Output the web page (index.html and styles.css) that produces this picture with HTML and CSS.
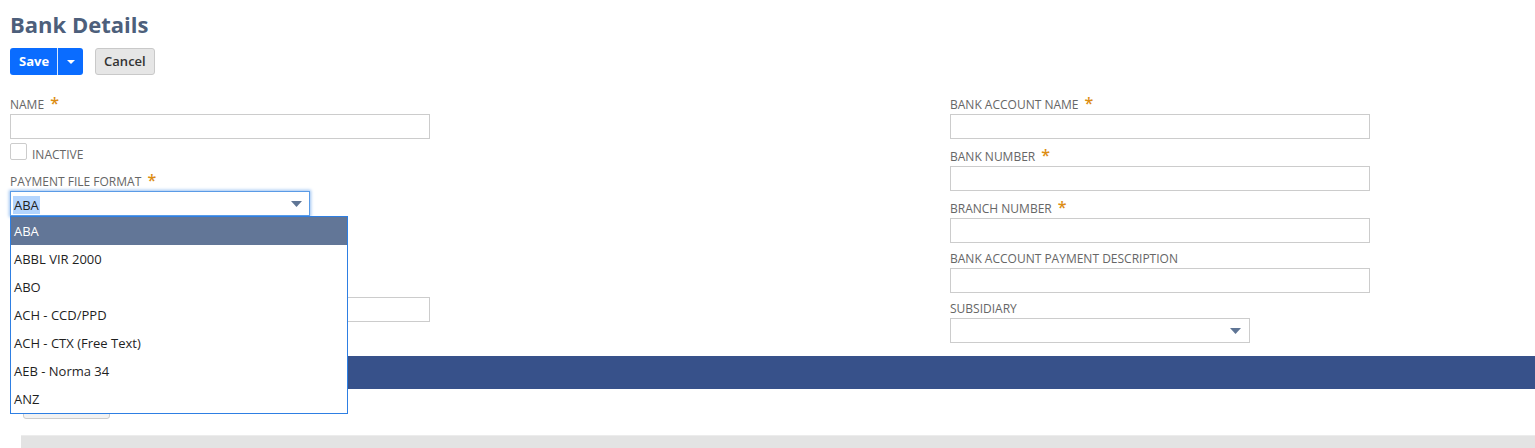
FILE: index.html
```html
<!DOCTYPE html>
<html lang="en">
<head>
<meta charset="utf-8">
<title>Bank Details</title>
<link rel="stylesheet" href="styles.css">
</head>
<body>
<div class="page">
  <h1 class="title">Bank Details</h1>

  <div class="actions">
    <div class="split">
      <button class="btn-primary" type="button">Save</button>
      <span class="btn-caret">
        <svg width="8" height="4" viewBox="0 0 8 4"><path d="M0 0h8L4 4z" fill="#fff"/></svg>
      </span>
    </div>
    <button class="btn-secondary" type="button">Cancel</button>
  </div>

  <div class="form">
    <div class="col">
      <div class="field">
        <label class="label label--req">NAME <span class="star">*</span></label>
        <div class="input"></div>
      </div>
      <div class="check-row">
        <span class="checkbox"></span>
        <span class="check-label">INACTIVE</span>
      </div>
      <div class="field field--after-check">
        <label class="label label--req">PAYMENT FILE FORMAT <span class="star">*</span></label>
        <div class="select select--focus">
          <span class="select-value"><span class="selection">ABA</span></span>
          <svg width="11" height="6" viewBox="0 0 11 6"><path d="M0 0h11L5.5 6z" fill="#5f7595"/></svg>
          <ul class="listbox">
            <li class="option option--active">ABA</li>
            <li class="option">ABBL VIR 2000</li>
            <li class="option">ABO</li>
            <li class="option">ACH - CCD/PPD</li>
            <li class="option">ACH - CTX (Free Text)</li>
            <li class="option">AEB - Norma 34</li>
            <li class="option">ANZ</li>
          </ul>
        </div>
      </div>
      <div class="field field--plain">
        <span class="label label--req">&nbsp;</span>
        <div class="select"></div>
      </div>
      <div class="field field--gap">
        <span class="label">&nbsp;</span>
        <div class="input"></div>
      </div>
    </div>

    <div class="col">
      <div class="field">
        <label class="label label--req">BANK ACCOUNT NAME <span class="star">*</span></label>
        <div class="input"></div>
      </div>
      <div class="field field--plain">
        <label class="label label--req">BANK NUMBER <span class="star">*</span></label>
        <div class="input"></div>
      </div>
      <div class="field field--plain">
        <label class="label label--req">BRANCH NUMBER <span class="star">*</span></label>
        <div class="input"></div>
      </div>
      <div class="field field--plain">
        <label class="label">BANK ACCOUNT PAYMENT DESCRIPTION</label>
        <div class="input"></div>
      </div>
      <div class="field field--plain">
        <label class="label">SUBSIDIARY</label>
        <div class="select select--arrow-only">
          <span class="select-value"></span>
          <svg width="11" height="6" viewBox="0 0 11 6"><path d="M0 0h11L5.5 6z" fill="#5f7595"/></svg>
        </div>
      </div>
    </div>
  </div>

  <div class="tabbar"></div>

  <div class="subtabs">
    <span class="btn-small"></span>
  </div>

  <div class="sublist-head">
    <span class="star star--head">*</span>
  </div>
</div>
</body>
</html>
```

FILE: styles.css
```css
html, body {
  margin: 0;
  overflow: hidden;
  background: #fff;
}

body {
  font-family: "Open Sans", "Liberation Sans", sans-serif;
  color: #333;
}

.page {
  padding: 8px 0 0 10px;
}

.title {
  margin: 0;
  font-size: 22px;
  line-height: 32px;
  font-weight: 700;
  color: #4d5f7b;
}

/* action buttons */
.actions {
  display: flex;
  gap: 12px;
  margin-top: 8px;
}

.split {
  display: flex;
  height: 27px;
  border-radius: 3px;
  overflow: hidden;
  background: #0a6cff;
}

.btn-primary {
  border: 0;
  margin: 0;
  background: transparent;
  color: #fff;
  font-family: "Open Sans", "Liberation Sans", sans-serif;
  font-weight: 700;
  font-size: 13px;
  line-height: 27px;
  padding: 0 8px 0 9px;
}

.btn-caret {
  width: 25px;
  border-left: 1px solid rgba(255, 255, 255, 0.85);
  display: flex;
  align-items: center;
  justify-content: center;
}

.btn-secondary {
  height: 27px;
  margin: 0;
  padding: 0 8px;
  border: 1px solid #c9c9c9;
  border-radius: 3px;
  background: #e6e6e6;
  color: #333;
  font-family: "Open Sans", "Liberation Sans", sans-serif;
  font-weight: 600;
  font-size: 13px;
  line-height: 25px;
}

/* form */
.form {
  display: grid;
  grid-template-columns: 940px 420px;
  align-items: start;
  margin-top: 21px;
}

.field--plain {
  margin-top: 9px;
}

.field--gap {
  margin-top: 13px;
}

.field--after-check {
  margin-top: 13px;
}

.label {
  display: block;
  font-size: 12px;
  line-height: 14px;
  color: #666;
  margin-bottom: 2px;
}

.label--req {
  padding-top: 2px;
}

.star {
  font-size: 16px;
  line-height: 0;
  font-weight: 600;
  color: #dc8d14;
  margin-left: 3px;
}

.input {
  box-sizing: border-box;
  width: 420px;
  height: 25px;
  border: 1px solid #cccccc;
  background: #fff;
}

.select {
  position: relative;
  box-sizing: border-box;
  width: 300px;
  height: 25px;
  border: 1px solid #cccccc;
  background: #fff;
  display: flex;
  align-items: center;
  justify-content: space-between;
  padding: 0 7px 0 3px;
}

.select--arrow-only {
  padding-right: 8px;
}

.select--focus {
  border-color: #5a9be6;
  box-shadow: 0 0 3px 1px #9cc3f2;
}

.select-value {
  font-size: 13px;
  line-height: 17px;
  color: #222;
  padding-top: 3px;
}

.selection {
  background: #b4d5fe;
  padding: 0 1px 0 1px;
  margin-left: -1px;
}

.listbox {
  position: absolute;
  top: 24px;
  left: -1px;
  z-index: 10;
  box-sizing: border-box;
  width: 338px;
  margin: 0;
  padding: 0;
  list-style: none;
  border: 1px solid #2e7fe3;
  background: #fff;
}

.option {
  height: 28px;
  line-height: 28px;
  padding-left: 3px;
  font-size: 13px;
  color: #1f1f1f;
}

.option--active {
  background: #627697;
  color: #fff;
}

.check-row {
  display: flex;
  align-items: flex-end;
  gap: 5px;
  margin-top: 4px;
}

.checkbox {
  box-sizing: border-box;
  width: 17px;
  height: 17px;
  border: 1px solid #cccccc;
  border-radius: 2px;
  background: #fff;
}

.check-label {
  font-size: 12px;
  line-height: 14px;
  color: #666;
  margin-bottom: -2px;
}

/* tabs and sublist */
.tabbar {
  height: 33px;
  margin-top: 13px;
  background: #37518a;
}

.subtabs {
  margin-top: 8px;
  padding-left: 13px;
  height: 22px;
}

.btn-small {
  display: block;
  box-sizing: border-box;
  width: 87px;
  height: 22px;
  border: 1px solid #cccccc;
  border-radius: 3px;
  background: #f2f2f2;
}

.sublist-head {
  margin: 16px 0 0 11px;
  height: 40px;
  padding-top: 7px;
  box-sizing: border-box;
  background: #e3e3e3;
  border-top: 1px solid #ececec;
}

.star--head {
  display: inline-block;
  line-height: 16px;
  margin-left: 706px;
}
```
